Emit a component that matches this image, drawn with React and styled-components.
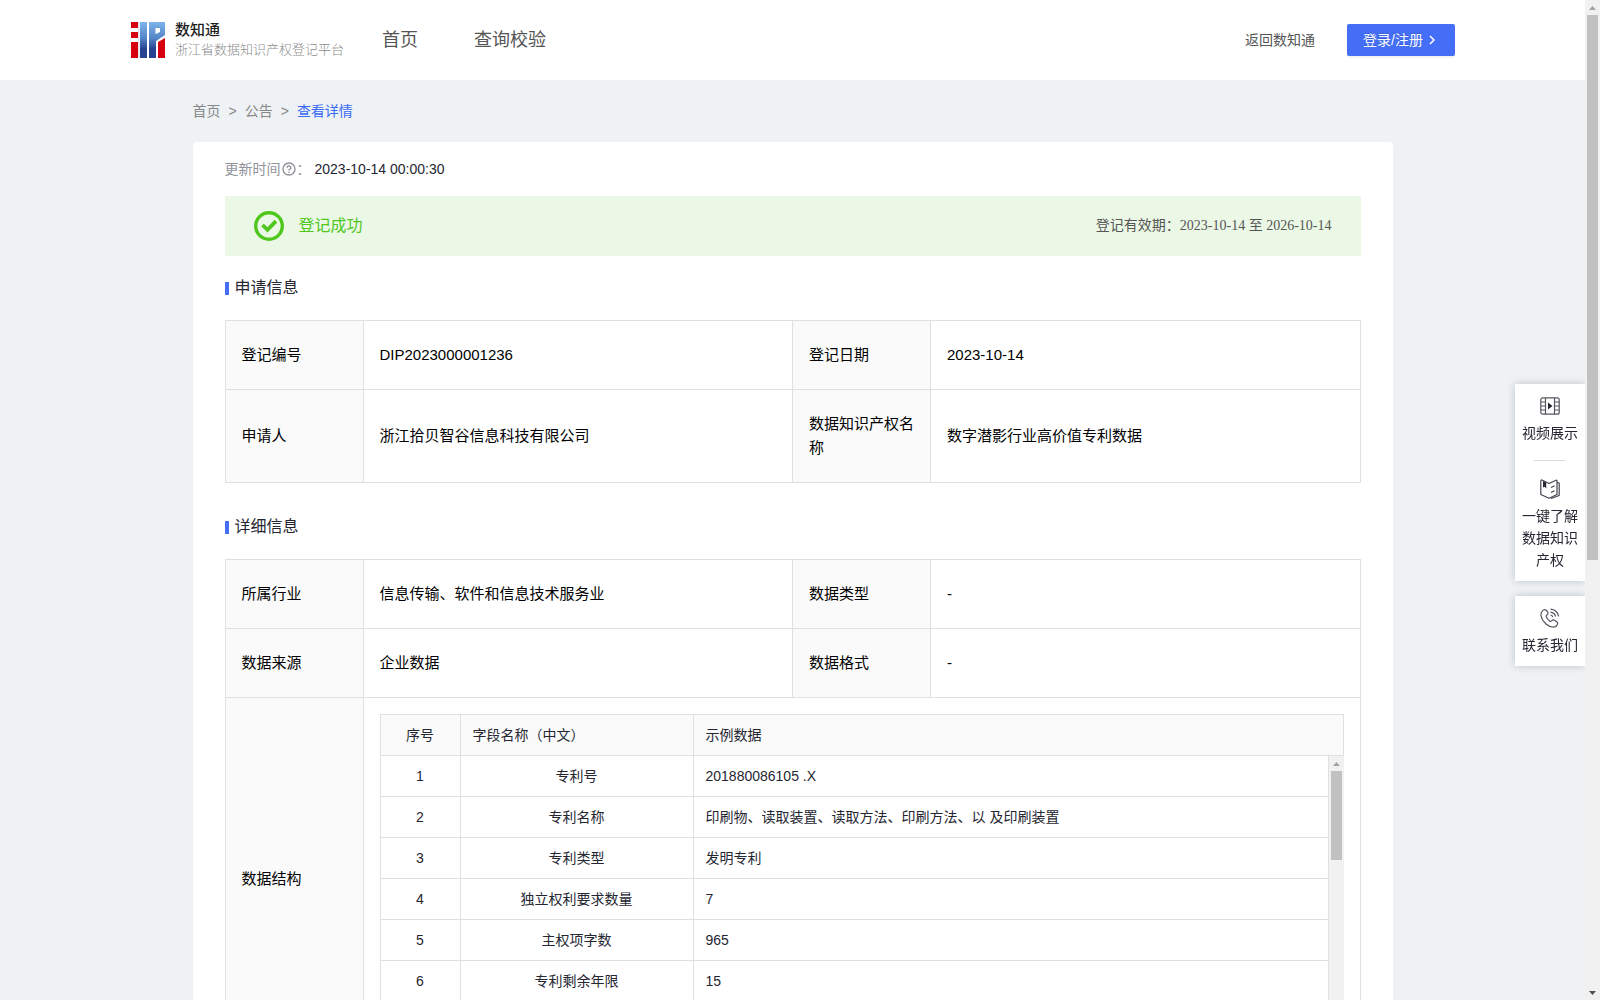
import React from 'react'
import styled, { createGlobalStyle } from 'styled-components'

const baseInfo = [
   ['登记编号', 'DIP2023000001236', '登记日期', '2023-10-14'],
   [
      '申请人',
      '浙江拾贝智谷信息科技有限公司',
      '数据知识产权名称',
      '数字潜影行业高价值专利数据',
   ],
]

const detailInfo = [
   ['所属行业', '信息传输、软件和信息技术服务业', '数据类型', '-'],
   ['数据来源', '企业数据', '数据格式', '-'],
]

const fields = [
   { id: 1, name: '专利号', example: '201880086105 .X' },
   {
      id: 2,
      name: '专利名称',
      example: '印刷物、读取装置、读取方法、印刷方法、以 及印刷装置',
   },
   { id: 3, name: '专利类型', example: '发明专利' },
   { id: 4, name: '独立权利要求数量', example: '7' },
   { id: 5, name: '主权项字数', example: '965' },
   { id: 6, name: '专利剩余年限', example: '15' },
]

const Logo = () => (
   <svg width="34" height="36" viewBox="0 0 34 36" aria-hidden="true">
      <defs>
         <linearGradient id="logoBlue" x1="0" y1="0" x2="0" y2="1">
            <stop offset="0" stopColor="#7db4ea" />
            <stop offset="0.45" stopColor="#5585c8" />
            <stop offset="0.75" stopColor="#26428f" />
            <stop offset="1" stopColor="#2a4590" />
         </linearGradient>
      </defs>
      <rect width="7" height="6" fill="#d7000f" />
      <rect y="10" width="7" height="6" fill="#d7000f" />
      <rect y="20" width="7" height="16" fill="#d7000f" />
      <path d="M7 0H8.500V36H7z" fill="#dfe6f0" />
      <rect x="9" width="7" height="36" fill="url(#logoBlue)" />
      <path
         d="M18 0H34V13L25 19V36H18zM24.500 6V12L29 10V6z"
         fill="url(#logoBlue)"
         fillRule="evenodd"
      />
      <path d="M27 20L34 16V36H27z" fill="#d7000f" />
   </svg>
)

const ArrowIcon = () => (
   <svg width="14" height="14" viewBox="0 0 14 14" aria-hidden="true">
      <path
         d="M5 3L9 7L5 11"
         fill="none"
         stroke="#fff"
         strokeWidth="1.500"
      />
   </svg>
)

const HelpIcon = () => (
   <svg width="14" height="14" viewBox="0 0 14 14" aria-hidden="true">
      <g fill="none" stroke="#909399" strokeWidth="1.400">
         <circle cx="7" cy="7" r="6" />
         <path d="M5.100 5.700a1.900 1.700 0 1 1 2.800 1.500q-.9.5-.9 1.300" />
      </g>
      <circle cx="7" cy="10.200" r=".8" fill="#909399" />
   </svg>
)

const SuccessIcon = () => (
   <svg width="30" height="30" viewBox="0 0 30 30" aria-hidden="true">
      <g fill="none" stroke="#4fc71d">
         <circle cx="15" cy="15" r="13.300" strokeWidth="3.400" />
         <path d="M8.500 14L13.500 18.800L22 10.200" strokeWidth="3.800" />
      </g>
   </svg>
)

const VideoIcon = () => (
   <svg width="20" height="20" viewBox="0 0 20 20" aria-hidden="true">
      <g fill="none" stroke="#55565e" strokeWidth="1.200">
         <rect x=".8" y="1.800" width="18.400" height="16.400" rx="2" />
         <path d="M5.500 2V18M14.500 2V18M1 6H5.500M1 10H5.500M1 14H5.500M14.500 6H19M14.500 10H19M14.500 14H19" />
      </g>
      <path d="M8 6.500L12.500 10L8 13.500z" fill="#252631" />
   </svg>
)

const BookIcon = () => (
   <svg width="20" height="20" viewBox="0 0 20 20" aria-hidden="true">
      <g
         fill="none"
         stroke="#44454e"
         strokeWidth="1.200"
         strokeLinejoin="round"
      >
         <path d="M9 4.500L2 1Q.8.8 .8 2V15.500L9 19.200L17 15.500V1.800Q17 .8 16 1.200z" />
         <path d="M17 3.500L19.200 4V16.500L11 19.500M11 8.500L14.500 6.800M11 13.500L14.500 11.800" />
      </g>
      <path d="M3 2L6.200 3.500V9.500L4.600 7.800L3 8.500z" fill="#252631" />
   </svg>
)

const PhoneIcon = () => (
   <svg width="20" height="20" viewBox="0 0 20 20" aria-hidden="true">
      <g
         fill="none"
         stroke="#55565e"
         strokeWidth="1.200"
         strokeLinejoin="round"
      >
         <path d="M6.300 2.200Q4.700.9 3.200 2.100Q.4 4.300 1.100 8Q2 12.500 6 16Q10 19.400 14.200 19Q16.700 18.400 17.600 16.200Q18 14.700 16.600 13.700L14.500 12.300Q13 11.500 11.900 12.700Q10.900 13.800 9.600 12.900Q7.300 11.200 6.200 8.700Q6 7.500 7.200 6.700Q8.400 5.700 7.700 4.200z" />
         <path d="M10.500 1.200Q17.300 1.800 18.600 8.300M10.500 4.200Q14.500 4.700 15.600 8.500" />
         <path d="M10.500 7Q12.300 7.300 12.800 9" />
      </g>
   </svg>
)

const RailArrow = ({ down, dim }) => (
   <svg width="15" height="15" viewBox="0 0 15 15" aria-hidden="true">
      <path
         d={down ? 'M4 6H11L7.500 10z' : 'M4 10H11L7.500 6z'}
         fill={dim ? '#a3a3a3' : '#505050'}
      />
   </svg>
)

const InfoRow = ({ cells }) => (
   <tr>
      <LabelCell scope="row">{cells[0]}</LabelCell>
      <ValueCell>{cells[1]}</ValueCell>
      <LabelCell scope="row">{cells[2]}</LabelCell>
      <ValueCell>{cells[3]}</ValueCell>
   </tr>
)

const InfoCols = () => (
   <colgroup>
      <Col $width={138} />
      <Col />
      <Col $width={138} />
      <Col />
   </colgroup>
)

const FieldCols = () => (
   <colgroup>
      <Col $width={80} />
      <Col $width={233} />
      <Col />
   </colgroup>
)

const FieldTable = () => (
   <div>
      <FieldHead>
         <FieldCols />
         <thead>
            <tr>
               <FieldTh $center>序号</FieldTh>
               <FieldTh>字段名称（中文）</FieldTh>
               <FieldTh>示例数据</FieldTh>
            </tr>
         </thead>
      </FieldHead>
      <FieldScroll>
         <FieldBody>
            <FieldCols />
            <tbody>
               {fields.map((field) => (
                  <tr key={field.id}>
                     <FieldTd $center>{field.id}</FieldTd>
                     <FieldTd $center>{field.name}</FieldTd>
                     <FieldTd>{field.example}</FieldTd>
                  </tr>
               ))}
            </tbody>
         </FieldBody>
         <Rail>
            <RailArrow dim />
            <Thumb $size="31%" />
         </Rail>
      </FieldScroll>
   </div>
)

const App = () => {
   return (
      <>
         <GlobalStyle />
         <Screen>
            <Page>
               <Header>
                  <Brand href="#">
                     <Logo />
                     <div>
                        <BrandName>数知通</BrandName>
                        <BrandSub>浙江省数据知识产权登记平台</BrandSub>
                     </div>
                  </Brand>
                  <Nav>
                     <NavLink href="#">首页</NavLink>
                     <NavLink href="#">查询校验</NavLink>
                  </Nav>
                  <BackLink href="#">返回数知通</BackLink>
                  <LoginButton type="button">
                     登录/注册
                     <ArrowIcon />
                  </LoginButton>
               </Header>
               <Content>
                  <Breadcrumb>
                     <a href="#">首页</a>
                     <span>&gt;</span>
                     <a href="#">公告</a>
                     <span>&gt;</span>
                     <Current href="#">查看详情</Current>
                  </Breadcrumb>
                  <Card>
                     <UpdateRow>
                        <UpdateLabel>
                           更新时间
                           <HelpIcon />：
                        </UpdateLabel>
                        <span>2023-10-14 00:00:30</span>
                     </UpdateRow>
                     <Banner>
                        <SuccessIcon />
                        <BannerTitle>登记成功</BannerTitle>
                        <Validity>
                           登记有效期：2023-10-14 至 2026-10-14
                        </Validity>
                     </Banner>
                     <SectionTitle>申请信息</SectionTitle>
                     <InfoTable>
                        <InfoCols />
                        <tbody>
                           {baseInfo.map((cells) => (
                              <InfoRow key={cells[0]} cells={cells} />
                           ))}
                        </tbody>
                     </InfoTable>
                     <SectionTitle>详细信息</SectionTitle>
                     <InfoTable>
                        <InfoCols />
                        <tbody>
                           {detailInfo.map((cells) => (
                              <InfoRow key={cells[0]} cells={cells} />
                           ))}
                           <tr>
                              <LabelCell scope="row">数据结构</LabelCell>
                              <NestedCell colSpan={3}>
                                 <FieldTable />
                              </NestedCell>
                           </tr>
                        </tbody>
                     </InfoTable>
                  </Card>
               </Content>
            </Page>
            <Rail>
               <RailArrow dim />
               <Thumb $size="545px" />
               <RailEnd>
                  <RailArrow down />
               </RailEnd>
            </Rail>
         </Screen>
         <Floating>
            <FloatPanel>
               <FloatButton type="button">
                  <VideoIcon />
                  视频展示
               </FloatButton>
               <Divider />
               <FloatButton type="button">
                  <BookIcon />
                  一键了解数据知识产权
               </FloatButton>
            </FloatPanel>
            <FloatPanel>
               <FloatButton type="button">
                  <PhoneIcon />
                  联系我们
               </FloatButton>
            </FloatPanel>
         </Floating>
      </>
   )
}

export default App

const GlobalStyle = createGlobalStyle`
   * {
      box-sizing: border-box;
   }
   body {
      margin: 0;
      background-color: #eef2f5;
      color: #252631;
      font-family: 'Liberation Sans', 'Noto Sans CJK SC', sans-serif;
      font-size: 14px;
      line-height: 22px;
   }
   a {
      color: inherit;
      text-decoration: none;
   }
   button {
      border: none;
      font: inherit;
      cursor: pointer;
   }
   svg {
      display: block;
      flex: none;
   }
`
const Screen = styled.div`
   display: flex;
   height: 100vh;
   overflow: hidden;
`
const Page = styled.div`
   flex: 1;
   min-width: 0;
   overflow: hidden;
`
const Header = styled.header`
   display: flex;
   align-items: center;
   height: 80px;
   padding: 0 130px 0 131px;
   background-color: white;
`
const Brand = styled.a`
   display: flex;
   align-items: center;
   gap: 10px;
   width: 223px;
   white-space: nowrap;
`
const BrandName = styled.div`
   font-size: 15px;
   font-weight: 500;
   line-height: 20px;
   color: #1f1f1f;
`
const BrandSub = styled.div`
   font-size: 13px;
   font-weight: 300;
   line-height: 20px;
   color: #8c8c8c;
`
const Nav = styled.nav`
   display: flex;
   flex: 1;
   padding-left: 28px;
   gap: 56px;
`
const NavLink = styled.a`
   font-size: 18px;
   line-height: 28px;
   color: #555;
`
const BackLink = styled.a`
   margin-right: 32px;
   color: #555;
`
const LoginButton = styled.button`
   display: flex;
   align-items: center;
   height: 32px;
   gap: 2px;
   padding: 0 16px;
   border-radius: 2px;
   background-color: #446ef5;
   color: white;
   box-shadow: 0 2px 0 rgb(0 0 0 / 5%);
   text-shadow: 0 -1px 0 rgb(0 0 0 / 12%);
`
const Content = styled.main`
   max-width: 1200px;
   margin: 0 auto;
`
const Breadcrumb = styled.nav`
   display: flex;
   gap: 8px;
   padding: 20px 0;
   color: #888;
`
const Current = styled.a`
   color: #3a6af5;
`
const Card = styled.div`
   padding: 16px 32px 32px;
   border-radius: 4px;
   background-color: white;
`
const UpdateRow = styled.div`
   display: flex;
   gap: 4px;
   margin-bottom: 16px;
`
const UpdateLabel = styled.span`
   display: flex;
   align-items: center;
   gap: 1px;
   color: #909399;
`
const Banner = styled.div`
   display: flex;
   align-items: center;
   gap: 15px;
   height: 60px;
   padding: 0 29px;
   background-color: #ebf8e6;
`
const BannerTitle = styled.span`
   flex: 1;
   font-size: 16px;
   color: #4fc71d;
`
const Validity = styled.span`
   color: #555;
   font-family: 'Liberation Serif', 'Noto Sans CJK SC', serif;
`
const SectionTitle = styled.h2`
   display: flex;
   align-items: center;
   gap: 6px;
   margin: 20px 0;
   font-size: 16px;
   font-weight: 400;
   line-height: 24px;
   &::before {
      content: '';
      width: 4px;
      height: 13px;
      background-color: #446ef5;
   }
`
const Table = styled.table`
   width: 100%;
   table-layout: fixed;
   border-collapse: separate;
   border-spacing: 0;
   border: 0 solid #e0e0e0;
   border-left-width: 1px;
`
const Col = styled.col`
   width: ${({ $width }) => ($width ? `${$width}px` : 'auto')};
`
const InfoTable = styled(Table)`
   margin-bottom: 32px;
   border-top-width: 1px;
   color: black;
   font-size: 15px;
   line-height: 24px;
`
const ValueCell = styled.td`
   padding: 22px 16px;
   border: 0 solid #e0e0e0;
   border-right-width: 1px;
   border-bottom-width: 1px;
`
const LabelCell = styled(ValueCell).attrs({ as: 'th' })`
   background-color: #fafafa;
   font-weight: 400;
   text-align: left;
`
const NestedCell = styled(ValueCell)`
   padding: 16px;
`
const FieldHead = styled(Table)`
   border-top-width: 1px;
   background-color: #fafafa;
   color: #252631;
   font-size: 14px;
   line-height: 22px;
`
const FieldScroll = styled.div`
   display: flex;
   align-items: flex-start;
   height: 288px;
   overflow: hidden;
`
const FieldBody = styled(Table)`
   flex: 1;
   min-width: 0;
   color: #252631;
   font-size: 14px;
   line-height: 22px;
`
const FieldTd = styled.td`
   padding: 9px 12px;
   border: 0 solid #e0e0e0;
   border-right-width: 1px;
   border-bottom-width: 1px;
   text-align: ${({ $center }) => ($center ? 'center' : 'left')};
`
const FieldTh = styled(FieldTd).attrs({ as: 'th' })`
   font-weight: 400;
`
const Rail = styled.div`
   display: flex;
   flex-direction: column;
   align-items: center;
   flex: none;
   width: 15px;
   height: 100%;
   background-color: #f1f1f1;
`
const Thumb = styled.div`
   width: 11px;
   height: ${({ $size }) => $size};
   background-color: #c1c1c1;
`
const RailEnd = styled.div`
   margin-top: auto;
`
const Floating = styled.aside`
   position: fixed;
   top: 384px;
   right: 15px;
   display: flex;
   flex-direction: column;
   gap: 15px;
   width: 70px;
   /* keeps the shadow off the scroll rail */
   clip-path: inset(-12px 0 -12px -12px);
`
const FloatPanel = styled.div`
   background-color: white;
   box-shadow: 0 0 8px rgb(0 0 0 / 20%);
`
const FloatButton = styled.button`
   display: flex;
   flex-direction: column;
   align-items: center;
   gap: 6px;
   width: 100%;
   padding: 12px 7px 10px;
   background: none;
   color: #252631;
`
const Divider = styled.hr`
   width: 32px;
   height: 1px;
   margin: 6px auto;
   border: none;
   background-color: #ddd;
`
